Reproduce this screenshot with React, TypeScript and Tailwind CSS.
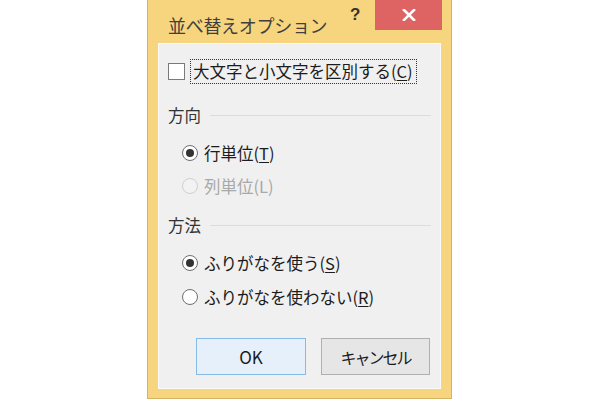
import React from 'react';

const FONT = "font-['Noto_Sans_CJK_JP','Noto_Sans',sans-serif]";

function Radio({ checked = false, disabled = false }: { checked?: boolean; disabled?: boolean }) {
    return (
        <span
            className={`flex items-center justify-center w-[16px] h-[16px] rounded-full border-[1.5px] ${
                disabled ? 'border-[#cfcfcf] bg-[#f2f2f2]' : 'border-[#6f6f6f] bg-white'
            }`}
        >
            {checked && <span className="w-[8px] h-[8px] rounded-full bg-[#333333]" />}
        </span>
    );
}

function RadioRow({
    label,
    mnemonic,
    checked,
    disabled,
    className = '',
}: {
    label: string;
    mnemonic: string;
    checked?: boolean;
    disabled?: boolean;
    className?: string;
}) {
    return (
        <div className={`flex items-center h-[24px] pl-[23px] gap-[6px] ${className}`}>
            <Radio checked={checked} disabled={disabled} />
            <span className={`text-[16.5px] leading-[24px] ${disabled ? 'text-[#a8a8a8]' : 'text-[#1c1c1c]'}`}>
                {label}(
                <span className={disabled ? '' : 'underline underline-offset-2'}>{mnemonic}</span>)
            </span>
        </div>
    );
}

function GroupHeading({ text, className = '' }: { text: string; className?: string }) {
    return (
        <div className={`flex items-center h-[24px] pl-[9px] pr-[9px] gap-[9px] ${className}`}>
            <span className="text-[16.5px] leading-[24px] text-[#333333]">{text}</span>
            <div className="flex-1 h-px bg-[#dcdcdc]" />
        </div>
    );
}

export default function App() {
    return (
        <div className={`w-[600px] h-[400px] bg-white pl-[147px] ${FONT}`}>
            <div className="w-[305px] h-[399px] bg-[#f7d57e] border-x border-b border-[#d4b464] flex flex-col px-[10px] pb-[9px]">
                {/* Title bar */}
                <div className="-mx-[10px] h-[43px] flex items-start pl-[20px] pr-[9px]">
                    <span className="flex-1 pt-[12px] text-[18px] leading-[26px] tracking-[-0.3px] text-[#3f3f3f]">
                        並べ替えオプション
                    </span>
                    <span className="w-[10px] mr-[15px] pt-[5px] text-center font-['Liberation_Sans',sans-serif] font-bold text-[17px] leading-[20px] text-[#333333]">
                        ?
                    </span>
                    <div className="w-[67px] h-[30px] bg-[#de6463] flex items-center justify-center">
                        <svg width="14" height="12" viewBox="0 0 14 12">
                            <path d="M2 1 L12 11 M12 1 L2 11" stroke="white" strokeWidth="2.6" strokeLinecap="square" />
                        </svg>
                    </div>
                </div>

                {/* Client area */}
                <div className="flex-1 bg-[#f0f0f0] border border-[#fafafa] flex flex-col">
                    <div className="flex items-center mt-[15px] pl-[9px] gap-[5px]">
                        <span className="w-[17px] h-[17px] border-[1.5px] border-[#7a7a7a] bg-white" />
                        <span className="h-[25px] w-[227px] border border-dotted border-[#333333] flex items-center px-[2px] text-[16.5px] leading-[23px] text-[#1c1c1c]">
                            大文字と小文字を区別する(<span className="underline underline-offset-2">C</span>)
                        </span>
                    </div>

                    <GroupHeading text="方向" className="mt-[19px]" />
                    <RadioRow label="行単位" mnemonic="T" checked className="mt-[14px]" />
                    <RadioRow label="列単位" mnemonic="L" disabled className="mt-[9px]" />

                    <GroupHeading text="方法" className="mt-[15px]" />
                    <RadioRow label="ふりがなを使う" mnemonic="S" checked className="mt-[14px]" />
                    <RadioRow label="ふりがなを使わない" mnemonic="R" className="mt-[10px]" />

                    <div className="flex justify-end gap-[15px] pr-[10px] mt-[29px]">
                        <button className="w-[110px] h-[37px] border border-[#86bbe8] bg-[#e6f0fa] text-[17px] text-[#1c1c1c] flex items-center justify-center">
                            OK
                        </button>
                        <button className="w-[109px] h-[37px] border border-[#b0b0b0] bg-[#e6e6e6] text-[16px] tracking-[-2px] text-[#1c1c1c] flex items-center justify-center">
                            キャンセル
                        </button>
                    </div>
                </div>
            </div>
        </div>
    );
}
